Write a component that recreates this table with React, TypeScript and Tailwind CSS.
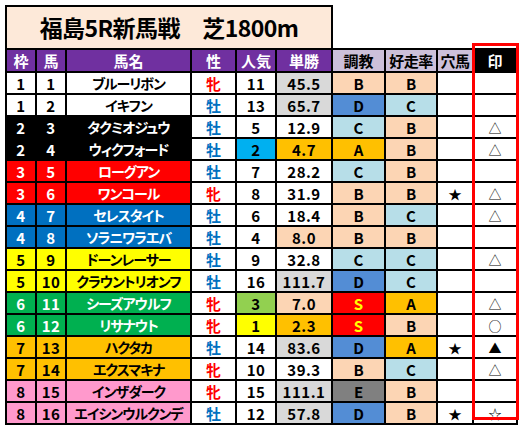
import React from "react";

type Row = {
  waku: number;
  uma: number;
  name: string;
  sex: "牡" | "牝";
  pop: number;
  odds: string;
  oddsBg: string;
  popBg: string;
  train: string;
  rate: string;
  ana: string;
  mark: string;
};

const wakuStyle: Record<number, string> = {
  1: "bg-white text-black",
  2: "bg-black text-white",
  3: "bg-[#ff0000] text-white",
  4: "bg-[#0070c0] text-white",
  5: "bg-[#ffff00] text-black",
  6: "bg-[#00b050] text-white",
  7: "bg-[#ffc000] text-black",
  8: "bg-[#ff99cc] text-black",
};

const gradeStyle: Record<string, string> = {
  S: "bg-[#ff0000] text-[#ffff00]",
  A: "bg-[#ffc000] text-black",
  B: "bg-[#fcd5b4] text-black",
  C: "bg-[#b7dee8] text-black",
  D: "bg-[#538dd5] text-black",
  E: "bg-[#808080] text-black",
};

const rows: Row[] = [
  { waku: 1, uma: 1, name: "ブルーリボン", sex: "牝", pop: 11, odds: "45.5", oddsBg: "bg-[#d9d9d9]", popBg: "bg-white", train: "B", rate: "B", ana: "", mark: "" },
  { waku: 1, uma: 2, name: "イキフン", sex: "牡", pop: 13, odds: "65.7", oddsBg: "bg-[#d9d9d9]", popBg: "bg-white", train: "D", rate: "C", ana: "", mark: "" },
  { waku: 2, uma: 3, name: "タクミオジュウ", sex: "牡", pop: 5, odds: "12.9", oddsBg: "bg-white", popBg: "bg-white", train: "C", rate: "B", ana: "", mark: "△" },
  { waku: 2, uma: 4, name: "ウィクフォード", sex: "牡", pop: 2, odds: "4.7", oddsBg: "bg-[#ffc000]", popBg: "bg-[#00b0f0]", train: "A", rate: "B", ana: "", mark: "△" },
  { waku: 3, uma: 5, name: "ローグアン", sex: "牡", pop: 7, odds: "28.2", oddsBg: "bg-white", popBg: "bg-white", train: "C", rate: "B", ana: "", mark: "" },
  { waku: 3, uma: 6, name: "ワンコール", sex: "牝", pop: 8, odds: "31.9", oddsBg: "bg-white", popBg: "bg-white", train: "B", rate: "B", ana: "★", mark: "△" },
  { waku: 4, uma: 7, name: "セレスタイト", sex: "牡", pop: 6, odds: "18.4", oddsBg: "bg-white", popBg: "bg-white", train: "B", rate: "C", ana: "", mark: "△" },
  { waku: 4, uma: 8, name: "ソラニワラエバ", sex: "牡", pop: 4, odds: "8.0", oddsBg: "bg-[#fcd5b4]", popBg: "bg-white", train: "B", rate: "B", ana: "", mark: "" },
  { waku: 5, uma: 9, name: "ドーンレーサー", sex: "牡", pop: 9, odds: "32.8", oddsBg: "bg-white", popBg: "bg-white", train: "C", rate: "C", ana: "", mark: "△" },
  { waku: 5, uma: 10, name: "クラウントリオンフ", sex: "牡", pop: 16, odds: "111.7", oddsBg: "bg-[#d9d9d9]", popBg: "bg-white", train: "D", rate: "C", ana: "", mark: "" },
  { waku: 6, uma: 11, name: "シーズアウルフ", sex: "牝", pop: 3, odds: "7.0", oddsBg: "bg-[#fcd5b4]", popBg: "bg-[#92d050]", train: "S", rate: "A", ana: "", mark: "△" },
  { waku: 6, uma: 12, name: "リサナウト", sex: "牝", pop: 1, odds: "2.3", oddsBg: "bg-[#ffc000]", popBg: "bg-[#ffff00]", train: "S", rate: "B", ana: "", mark: "○" },
  { waku: 7, uma: 13, name: "ハクタカ", sex: "牡", pop: 14, odds: "83.6", oddsBg: "bg-[#d9d9d9]", popBg: "bg-white", train: "D", rate: "A", ana: "★", mark: "▲" },
  { waku: 7, uma: 14, name: "エクスマキナ", sex: "牝", pop: 10, odds: "39.3", oddsBg: "bg-white", popBg: "bg-white", train: "B", rate: "C", ana: "", mark: "△" },
  { waku: 8, uma: 15, name: "インザダーク", sex: "牝", pop: 15, odds: "111.1", oddsBg: "bg-[#d9d9d9]", popBg: "bg-white", train: "E", rate: "B", ana: "", mark: "" },
  { waku: 8, uma: 16, name: "エイシンウルクンデ", sex: "牡", pop: 12, odds: "57.8", oddsBg: "bg-[#d9d9d9]", popBg: "bg-white", train: "D", rate: "B", ana: "★", mark: "☆" },
];

const cell = "flex items-center justify-center leading-none";

export default function App() {
  return (
    <div className="min-h-screen bg-white font-['Noto_Sans_CJK_JP',sans-serif] font-bold text-black [font-feature-settings:'palt']">
      <div className="relative ml-[5px] pt-[5px] w-[513px]">
        <div className="flex h-[43px] w-[328px] items-center justify-center border-2 border-b-0 border-black bg-[#fde9d9] text-[23px] tracking-tight">
          福島5R新馬戦　芝1800m
        </div>
        <div className="grid grid-cols-[28px_28px_123px_43px_38px_54px_51px_50px_34px_42px] grid-rows-[21px] auto-rows-[20px] gap-[2px] bg-black p-[2px] text-[15px]">
          <div className={`${cell} bg-[#7030a0] text-white`}>枠</div>
          <div className={`${cell} bg-[#7030a0] text-white`}>馬</div>
          <div className={`${cell} bg-[#7030a0] text-white`}>馬名</div>
          <div className={`${cell} bg-[#7030a0] text-white`}>性</div>
          <div className={`${cell} bg-[#7030a0] text-white`}>人気</div>
          <div className={`${cell} bg-[#7030a0] text-white`}>単勝</div>
          <div className={`${cell} bg-[#ccc0da]`}>調教</div>
          <div className={`${cell} bg-[#ccc0da] tracking-[-0.5px]`}>好走率</div>
          <div className={`${cell} bg-[#ccc0da] tracking-[-0.5px]`}>穴馬</div>
          <div className={`${cell} bg-black text-white`}>印</div>
          {rows.map((r) => (
            <React.Fragment key={r.uma}>
              <div className={`${cell} ${wakuStyle[r.waku]} tracking-[0.5px]`}>{r.waku}</div>
              <div className={`${cell} ${wakuStyle[r.waku]} tracking-[0.5px]`}>{r.uma}</div>
              <div className={`${cell} ${wakuStyle[r.waku]} whitespace-nowrap text-[14px] tracking-[-1px]`}>{r.name}</div>
              <div className={`${cell} bg-white ${r.sex === "牝" ? "text-[#ff0000]" : "text-[#0070c0]"}`}>{r.sex}</div>
              <div className={`${cell} ${r.popBg} tracking-[0.5px]`}>{r.pop}</div>
              <div className={`${cell} ${r.oddsBg} tracking-[0.5px]`}>{r.odds}</div>
              <div className={`${cell} ${gradeStyle[r.train]}`}>{r.train}</div>
              <div className={`${cell} ${gradeStyle[r.rate]}`}>{r.rate}</div>
              <div className={`${cell} bg-white text-[13px]`}>{r.ana}</div>
              <div className={`${cell} bg-white font-normal text-[13px]`}>{r.mark}</div>
            </React.Fragment>
          ))}
        </div>
        <div className="absolute left-[467px] top-[43px] h-[377px] w-[47px] border-[3px] border-[#ff0000]" />
      </div>
    </div>
  );
}
